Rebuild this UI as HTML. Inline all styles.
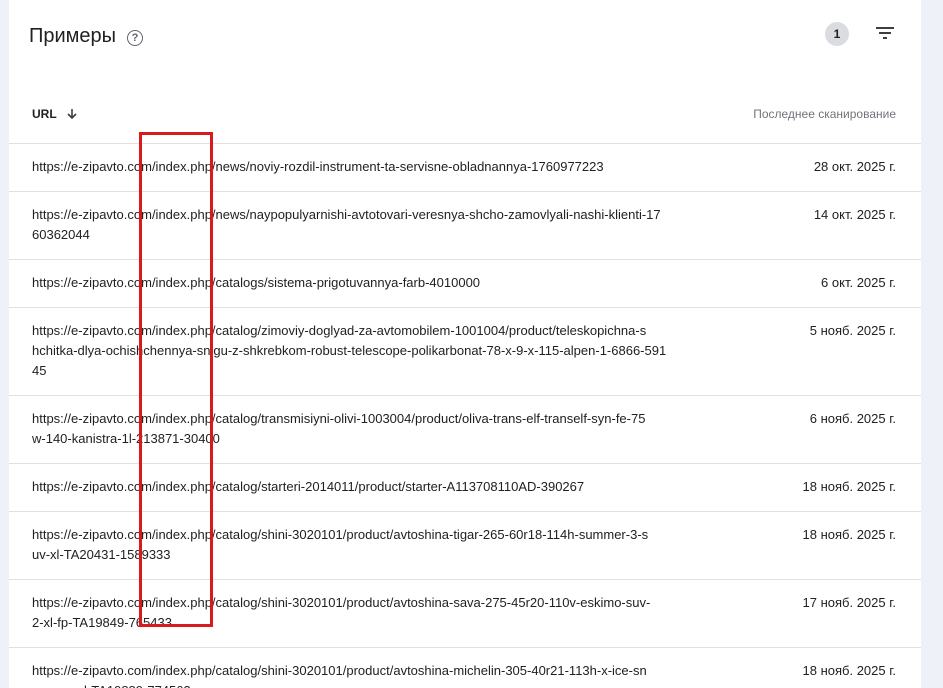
<!DOCTYPE html>
<html style="height:688px;overflow:hidden"><head><meta charset="utf-8"><style>
body{margin:0;width:943px;height:688px;overflow:hidden;background:#eef2f8;font-family:"Liberation Sans",Arial,sans-serif;position:relative}
.card{position:absolute;left:9px;top:0;width:912px;height:688px;background:#fff;overflow:hidden}
h1{position:absolute;left:20px;top:25px;margin:0;font-weight:400;font-size:20px;color:#202124}
.help{position:absolute;left:118px;top:30px;width:14px;height:14px;border:1.5px solid #5f6368;border-radius:50%;font-size:11px;line-height:14px;text-align:center;color:#5f6368;font-weight:bold}
.badge{position:absolute;left:816px;top:22px;width:24px;height:24px;border-radius:50%;background:#dadce0;font-size:12px;font-weight:bold;line-height:24px;text-align:center;color:#202124}
.filt{position:absolute;left:867px;top:26px}
.hdr{position:absolute;top:107px;font-size:12px}
.row{position:absolute;left:0;width:912px;border-top:1px solid #e0e0e0;font-size:13px;color:#202124;line-height:20px}
.u{position:absolute;left:23px;top:13px;white-space:nowrap}
.d{position:absolute;right:25px;top:13px;white-space:nowrap}
.red{position:absolute;left:139px;top:132px;width:68px;height:489px;border:3px solid #d91a1a}
</style></head><body>
<div class="card">
<h1>Примеры</h1><div class="help">?</div>
<div class="badge">1</div>
<svg class="filt" width="18" height="14" viewBox="0 0 18 14"><rect x="0" y="1" width="18" height="2" fill="#3c4043"/><rect x="3" y="6" width="12" height="2" fill="#3c4043"/><rect x="7" y="11" width="4" height="2" fill="#3c4043"/></svg>
<div class="hdr" style="left:23px;color:#202124;font-weight:bold">URL <svg width="12" height="12" viewBox="0 0 12 12" style="vertical-align:-2px;margin-left:6px"><path d="M6 1v9M2 6l4 4 4-4" stroke="#3c4043" stroke-width="1.6" fill="none"/></svg></div>
<div class="hdr" style="right:25px;color:#70757a">Последнее сканирование</div>
<div class="row" style="top:143px;height:48px"><div class="u">https://e-zipavto.com/index.php/news/noviy-rozdil-instrument-ta-servisne-obladnannya-1760977223</div><div class="d">28 окт. 2025 г.</div></div>
<div class="row" style="top:191px;height:68px"><div class="u">https://e-zipavto.com/index.php/news/naypopulyarnishi-avtotovari-veresnya-shcho-zamovlyali-nashi-klienti-17<br>60362044</div><div class="d">14 окт. 2025 г.</div></div>
<div class="row" style="top:259px;height:48px"><div class="u">https://e-zipavto.com/index.php/catalogs/sistema-prigotuvannya-farb-4010000</div><div class="d">6 окт. 2025 г.</div></div>
<div class="row" style="top:307px;height:88px"><div class="u">https://e-zipavto.com/index.php/catalog/zimoviy-doglyad-za-avtomobilem-1001004/product/teleskopichna-s<br>hchitka-dlya-ochishchennya-snigu-z-shkrebkom-robust-telescope-polikarbonat-78-x-9-x-115-alpen-1-6866-591<br>45</div><div class="d">5 нояб. 2025 г.</div></div>
<div class="row" style="top:395px;height:68px"><div class="u">https://e-zipavto.com/index.php/catalog/transmisiyni-olivi-1003004/product/oliva-trans-elf-tranself-syn-fe-75<br>w-140-kanistra-1l-213871-30400</div><div class="d">6 нояб. 2025 г.</div></div>
<div class="row" style="top:463px;height:48px"><div class="u">https://e-zipavto.com/index.php/catalog/starteri-2014011/product/starter-A113708110AD-390267</div><div class="d">18 нояб. 2025 г.</div></div>
<div class="row" style="top:511px;height:68px"><div class="u">https://e-zipavto.com/index.php/catalog/shini-3020101/product/avtoshina-tigar-265-60r18-114h-summer-3-s<br>uv-xl-TA20431-1589333</div><div class="d">18 нояб. 2025 г.</div></div>
<div class="row" style="top:579px;height:68px"><div class="u">https://e-zipavto.com/index.php/catalog/shini-3020101/product/avtoshina-sava-275-45r20-110v-eskimo-suv-<br>2-xl-fp-TA19849-765433</div><div class="d">17 нояб. 2025 г.</div></div>
<div class="row" style="top:647px;height:41px"><div class="u">https://e-zipavto.com/index.php/catalog/shini-3020101/product/avtoshina-michelin-305-40r21-113h-x-ice-sn<br>ow-suv-xl-TA19889-774563</div><div class="d">18 нояб. 2025 г.</div></div>
</div>
<div class="red"></div>
</body></html>
